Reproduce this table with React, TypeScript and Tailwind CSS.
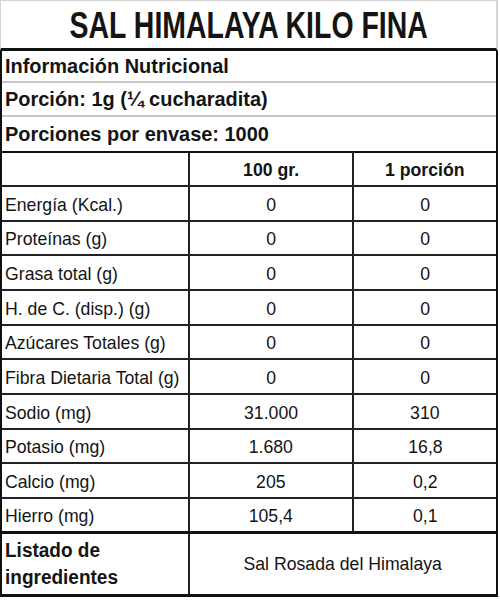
const rows = [
  { label: "Energía (Kcal.)", a: "0", b: "0", h: "h-[35px]" },
  { label: "Proteínas (g)", a: "0", b: "0", h: "h-[34px]" },
  { label: "Grasa total (g)", a: "0", b: "0", h: "h-[35px]" },
  { label: "H. de C. (disp.) (g)", a: "0", b: "0", h: "h-[35px]" },
  { label: "Azúcares Totales (g)", a: "0", b: "0", h: "h-[34px]" },
  { label: "Fibra Dietaria Total (g)", a: "0", b: "0", h: "h-[35px]" },
  { label: "Sodio (mg)", a: "31.000", b: "310", h: "h-[35px]" },
  { label: "Potasio (mg)", a: "1.680", b: "16,8", h: "h-[34px]" },
  { label: "Calcio (mg)", a: "205", b: "0,2", h: "h-[35px]" },
  { label: "Hierro (mg)", a: "105,4", b: "0,1", h: "h-[35px]" },
];

// narrow-ish text, like the squeezed spreadsheet export
const squeeze = "inline-block whitespace-nowrap [transform:scaleX(0.93)]";

export default function App() {
  return (
    <div
      className="w-[500px] h-[600px] bg-white text-[#141414]"
      style={{ fontFamily: '"Liberation Sans", Arial, sans-serif' }}
    >
      <div className="w-[498px]">
        {/* title */}
        <div className="h-[51px] border-t border-l border-r-2 border-[#d4d4d4] border-b-[3px] border-b-[#111] flex items-center justify-center overflow-hidden">
          <span className="inline-block font-bold text-[36px] leading-[40px] [transform:scaleX(0.79)] whitespace-nowrap pt-[3px]">
            SAL HIMALAYA KILO FINA
          </span>
        </div>

        <div className="border-l-2 border-r-2 border-b-[3px] border-[#111]">
          {/* info rows */}
          <div className="h-[32px] border-b-2 border-[#c8c8c8] flex items-center pl-[3px] font-bold text-[21px] leading-[22px]">
            <span className="inline-block whitespace-nowrap origin-left [transform:scaleX(0.95)]">
              Información Nutricional
            </span>
          </div>
          <div className="h-[34px] border-b-2 border-[#c8c8c8] flex items-center pl-[3px] font-bold text-[21px] leading-[22px]">
            <span className="inline-block whitespace-nowrap origin-left [transform:scaleX(0.95)]">
              Porción: 1g (¼ cucharadita)
            </span>
          </div>
          <div className="h-[36px] border-b-2 border-[#111] flex items-center pl-[3px] font-bold text-[21px] leading-[22px]">
            <span className="inline-block whitespace-nowrap origin-left [transform:scaleX(0.95)]">
              Porciones por envase: 1000
            </span>
          </div>

          {/* header */}
          <div className="h-[34px] border-b-2 border-[#222] flex text-[19px] leading-[20px] font-bold">
            <div className="w-[188px] border-r-2 border-[#222]" />
            <div className="w-[164px] border-r-2 border-[#222] flex items-center justify-center pt-[1px]">
              <span className={squeeze}>100 gr.</span>
            </div>
            <div className="flex-1 flex items-center justify-center pt-[1px]">
              <span className={squeeze}>1 porción</span>
            </div>
          </div>

          {rows.map((r, i) => (
            <div
              key={r.label}
              className={`${r.h} ${
                i === rows.length - 1 ? "border-b-[3px] border-[#111]" : "border-b-2 border-[#222]"
              } flex text-[19px] leading-[20px]`}
            >
              <div className="w-[188px] border-r-2 border-[#222] flex items-center pl-[3px] pt-[2px] overflow-hidden">
                <span className={`${squeeze} origin-left`}>{r.label}</span>
              </div>
              <div className="w-[164px] border-r-2 border-[#222] flex items-center justify-center pt-[2px]">
                <span className={squeeze}>{r.a}</span>
              </div>
              <div className="flex-1 flex items-center justify-center pt-[2px]">
                <span className={squeeze}>{r.b}</span>
              </div>
            </div>
          ))}

          {/* ingredients */}
          <div className="h-[60px] flex">
            <div className="w-[188px] border-r-2 border-[#222] flex items-center pl-[3px] font-bold text-[20px] leading-[27px]">
              <span className="inline-block origin-left [transform:scaleX(0.95)]">
                Listado de
                <br />
                ingredientes
              </span>
            </div>
            <div className="flex-1 flex items-center justify-center text-[19px] leading-[20px]">
              <span className={squeeze}>Sal Rosada del Himalaya</span>
            </div>
          </div>
        </div>
      </div>
    </div>
  );
}
